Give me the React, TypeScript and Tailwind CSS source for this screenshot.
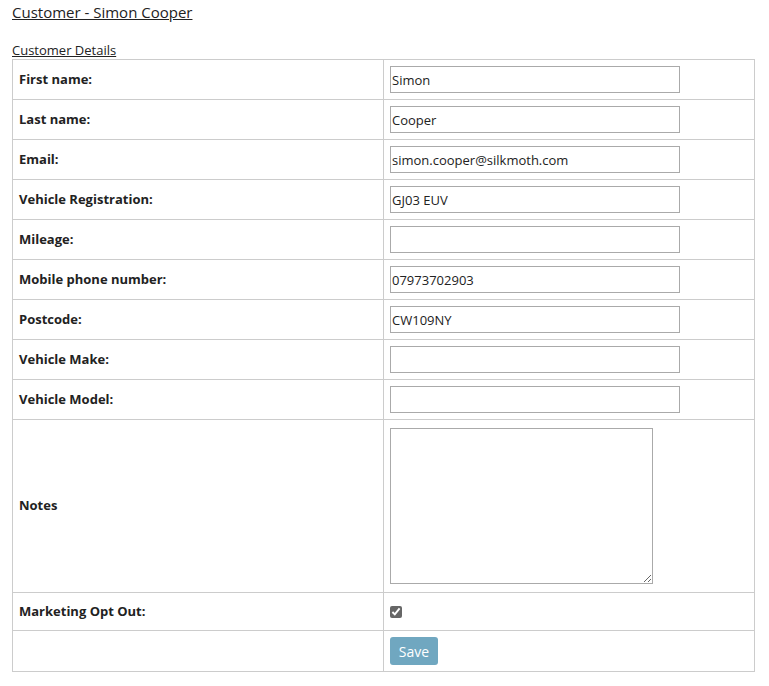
import React from "react";

export default function App() {
  const rows = [
    { label: "First name:", value: "Simon" },
    { label: "Last name:", value: "Cooper" },
    { label: "Email:", value: "simon.cooper@silkmoth.com" },
    { label: "Vehicle Registration:", value: "GJ03 EUV" },
    { label: "Mileage:", value: "" },
    { label: "Mobile phone number:", value: "07973702903" },
    { label: "Postcode:", value: "CW109NY" },
    { label: "Vehicle Make:", value: "" },
    { label: "Vehicle Model:", value: "" },
  ];

  const cell = "border border-[#ccc] px-[6px] align-middle";

  return (
    <div className="bg-white text-[#222] px-[12px] pt-[1px]" style={{ fontFamily: '"Open Sans", sans-serif' }}>
      <h1 className="text-[15px] underline mt-[1px] leading-[20px]">Customer - Simon Cooper</h1>
      <div className="text-[13px] underline mt-[19px] leading-[18px]">Customer Details</div>
      <table className="border-collapse w-[743px] text-[13px]">
        <tbody>
          {rows.map((r) => (
            <tr key={r.label} className="h-[40px]">
              <td className={`${cell} font-bold w-[371px]`}>{r.label}</td>
              <td className={cell}>
                <input
                  defaultValue={r.value}
                  className="w-[290px] h-[27px] border border-[#aaa] px-[1px] text-[13px] text-[#222] outline-none"
                />
              </td>
            </tr>
          ))}
          <tr className="h-[173px]">
            <td className={`${cell} font-bold`}>Notes</td>
            <td className={`${cell} py-[6px]`}>
              <textarea className="block w-[263px] h-[156px] border border-[#aaa] resize" />
            </td>
          </tr>
          <tr className="h-[38px]">
            <td className={`${cell} font-bold`}>Marketing Opt Out:</td>
            <td className={cell}>
              <input type="checkbox" defaultChecked className="block w-[12px] h-[12px] accent-[#666]" />
            </td>
          </tr>
          <tr className="h-[41px]">
            <td className={cell}></td>
            <td className={cell}>
              <button className="bg-[#70a7c0] text-white text-[14px] rounded-[3px] w-[48px] h-[28px]">Save</button>
            </td>
          </tr>
        </tbody>
      </table>
    </div>
  );
}
